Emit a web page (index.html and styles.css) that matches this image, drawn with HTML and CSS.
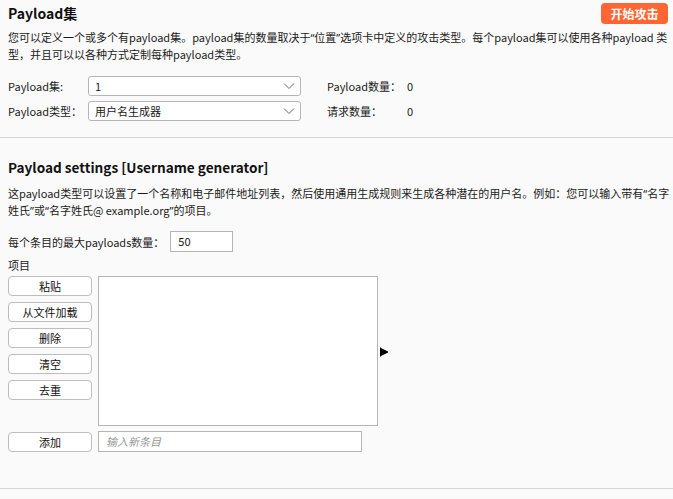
FILE: index.html
```html
<!DOCTYPE html>
<html>
<head>
<meta charset="utf-8">
<link rel="stylesheet" href="styles.css">
</head>
<body>
<section class="sec top">
  <div class="head">
    <h2 class="title">Payload集</h2>
    <button class="attack">开始攻击</button>
  </div>
  <p class="desc">您可以定义一个或多个有payload集。payload集的数量取决于<span class="q">“</span>位置<span class="q">”</span>选项卡中定义的攻击类型。每个payload集可以使用各种payload 类<br>型，并且可以以各种方式定制每种payload类型。</p>
  <div class="grid">
    <span class="lbl">Payload集:</span>
    <div class="select"><span>1</span><svg width="12" height="8" viewBox="0 0 12 8"><path d="M1 1.5 L6 6.5 L11 1.5" fill="none" stroke="#666" stroke-width="1"/></svg></div>
    <span class="lbl2">Payload数量：</span>
    <span class="val">0</span>
    <span class="lbl">Payload类型：</span>
    <div class="select"><span>用户名生成器</span><svg width="12" height="8" viewBox="0 0 12 8"><path d="M1 1.5 L6 6.5 L11 1.5" fill="none" stroke="#666" stroke-width="1"/></svg></div>
    <span class="lbl2">请求数量：</span>
    <span class="val">0</span>
  </div>
</section>
<section class="sec settings">
  <h2 class="title sub">Payload settings [Username generator]</h2>
  <p class="desc desc2">这payload类型可以设置了一个名称和电子邮件地址列表，然后使用通用生成规则来生成各种潜在的用户名。例如：您可以输入带有<span class="q">“</span>名字<br>姓氏<span class="q">”</span>或<span class="q">“</span>名字姓氏@ example.org<span class="q">”</span>的项目。</p>
  <div class="maxrow">
    <span>每个条目的最大payloads数量：</span>
    <div class="numbox">50</div>
  </div>
  <div class="items-label">项目</div>
  <div class="items">
    <div class="btns">
      <button class="btn">粘贴</button>
      <button class="btn">从文件加载</button>
      <button class="btn">删除</button>
      <button class="btn">清空</button>
      <button class="btn">去重</button>
    </div>
    <div class="listbox"></div>
    <svg class="arrow" width="9" height="10" viewBox="0 0 9 10"><path d="M0 0 L0 10 L1 9 L8 5.5 L8 4.5 L1 1 Z" fill="#000"/></svg>
  </div>
  <div class="addrow">
    <button class="btn">添加</button>
    <div class="newitem">输入新条目</div>
  </div>
</section>
</body>
</html>
```
FILE: styles.css
```css
html, body { margin: 0; padding: 0; }
body {
  background: #fafafa;
  font-family: "Noto Sans CJK SC", "Noto Sans", sans-serif;
  font-size: 11px;
  color: #1a1a1a;
  width: 673px;
  height: 499px;
  overflow: hidden;
}
.q { font-family: "Noto Sans", sans-serif; }
.sec { padding: 0 8px; }
.top { border-bottom: 1px solid #d4d4d4; height: 138px; box-sizing: border-box; padding-top: 3px; }
.head { display: flex; justify-content: space-between; align-items: flex-start; }
.title { margin: 0; font-size: 14px; font-weight: bold; line-height: 20px; color: #111; }
.attack {
  background: #ff6633; color: #fff; border: none; border-radius: 4px;
  font: bold 12px "Noto Sans CJK SC", sans-serif;
  width: 67px; height: 21px; margin-right: -3px; padding: 0;
}
.desc { margin: 5px 0 0; line-height: 16px; white-space: nowrap; }
.grid {
  display: grid;
  grid-template-columns: 80px 213px 106px 20px;
  row-gap: 5px;
  align-items: center;
  margin-top: 14px;
  white-space: nowrap;
}
.grid .lbl2 { padding-left: 26px; }
.select {
  height: 20px; box-sizing: border-box;
  border: 1px solid #b5b5b5; border-radius: 3px; background: #fff;
  display: flex; justify-content: space-between; align-items: center;
  padding: 0 5px 0 6px;
}
.settings { height: 351px; border-bottom: 1px solid #d4d4d4; box-sizing: border-box; padding-top: 19px; }
.sub { line-height: 20px; font-size: 13.6px; }
.desc2 { margin-top: 8px; line-height: 17px; }
.maxrow { display: flex; align-items: center; margin-top: 12px; gap: 6px; }
.numbox {
  width: 63px; height: 21px; box-sizing: border-box; background: #fff;
  border: 1px solid #b5b5b5; padding: 0 7px; line-height: 19px;
}
.items-label { margin-top: 5px; line-height: 16px; }
.items { display: flex; align-items: flex-start; margin-top: 3px; }
.btns { display: flex; flex-direction: column; gap: 6px; width: 84px; }
.btn {
  width: 84px; height: 20px; box-sizing: border-box; padding: 0;
  background: #fff; border: 1px solid #bdbdbd; border-radius: 4px;
  font: 11px "Noto Sans CJK SC", sans-serif; color: #111;
}
.listbox {
  margin-left: 6px; width: 280px; height: 150px; box-sizing: border-box;
  background: #fff; border: 1px solid #b5b5b5;
}
.arrow { margin: 71px 0 0 2px; }
.addrow { display: flex; align-items: center; margin-top: 5px; gap: 6px; }
.newitem {
  width: 264px; height: 21px; box-sizing: border-box; background: #fff;
  border: 1px solid #b5b5b5; padding: 0 7px; line-height: 19px;
  color: #999; font-style: italic;
}
```
